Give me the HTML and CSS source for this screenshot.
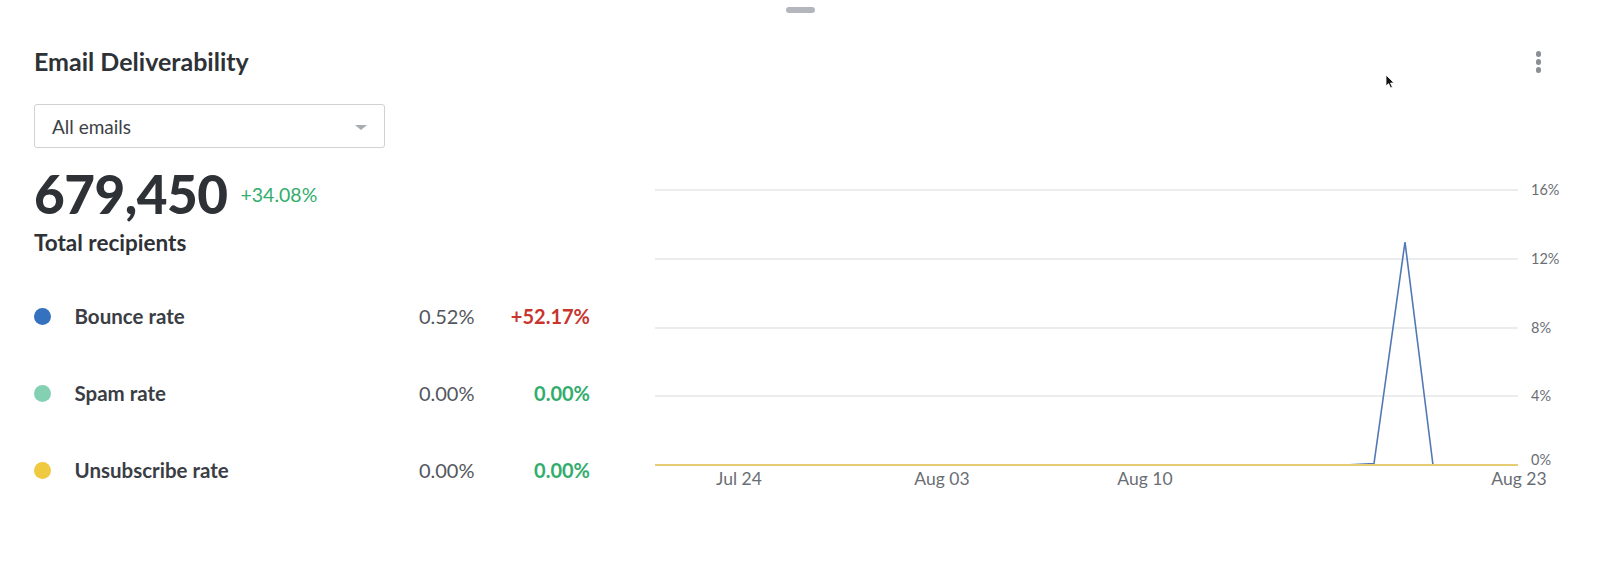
FILE: index.html
```html
<!DOCTYPE html>
<html>
<head>
<meta charset="utf-8">
<link rel="stylesheet" href="styles.css">
</head>
<body>
<div class="page">
  <div class="handle"></div>
  <div class="card">
    <div class="header">
      <h1 class="title">Email Deliverability</h1>
      <button class="kebab" aria-label="More">
        <span></span><span></span><span></span>
      </button>
    </div>
    <div class="main">
      <div class="left">
        <div class="select">
          <span>All emails</span>
          <span class="caret"></span>
        </div>
        <div class="total">
          <span class="big">679,450</span>
          <span class="delta green">+34.08%</span>
        </div>
        <div class="total-label">Total recipients</div>
        <div class="rows">
          <div class="row">
            <span class="dot blue"></span>
            <span class="label">Bounce rate</span>
            <span class="value">0.52%</span>
            <span class="change red">+52.17%</span>
          </div>
          <div class="row">
            <span class="dot teal"></span>
            <span class="label">Spam rate</span>
            <span class="value">0.00%</span>
            <span class="change green">0.00%</span>
          </div>
          <div class="row">
            <span class="dot yellow"></span>
            <span class="label">Unsubscribe rate</span>
            <span class="value">0.00%</span>
            <span class="change green">0.00%</span>
          </div>
        </div>
      </div>
      <svg class="chart" width="930" height="400" viewBox="0 0 930 400">
        <g class="grid">
          <line x1="15" y1="86" x2="878" y2="86"/>
          <line x1="15" y1="155" x2="878" y2="155"/>
          <line x1="15" y1="224" x2="878" y2="224"/>
          <line x1="15" y1="292" x2="878" y2="292"/>
        </g>
        <g class="ylabels">
          <text x="891" y="91">16%</text>
          <text x="891" y="160">12%</text>
          <text x="891" y="229">8%</text>
          <text x="891" y="297">4%</text>
          <text x="891" y="361">0%</text>
        </g>
        <polyline class="line-blue" points="15,361 705,361 734,359.5 765,138 793,361 878,361"/>
        <line class="line-yellow" x1="15" y1="361" x2="878" y2="361"/>
        <g class="xlabels">
          <text x="99" y="381">Jul 24</text>
          <text x="302" y="381">Aug 03</text>
          <text x="505" y="381">Aug 10</text>
          <text x="879" y="381">Aug 23</text>
        </g>
      </svg>
    </div>
  </div>
  <svg class="cursor" width="12" height="16" viewBox="0 0 12 16">
    <path d="M1 1 L1 12 L3.6 9.6 L5.6 14 L7.4 13.2 L5.5 9 L9 9 Z" fill="#111" stroke="#fff" stroke-width="0.8"/>
  </svg>
</div>
</body>
</html>
```

FILE: styles.css
```css
* { box-sizing: border-box; }
html, body {
  margin: 0;
  padding: 0;
  background: #ffffff;
}
body {
  font-family: Lato, "Open Sans", "Liberation Sans", sans-serif;
  color: #2e3237;
  width: 1600px;
  height: 569px;
  overflow: hidden;
}
.page {
  position: relative;
  height: 569px;
}
.handle {
  width: 29px;
  height: 6px;
  border-radius: 3px;
  background: #b3b6bc;
  margin: 7px auto 0;
}
.card {
  padding: 0 59px 0 34px;
}
.header {
  display: flex;
  justify-content: space-between;
  align-items: flex-start;
  margin-top: 33px;
  height: 30px;
}
.title {
  margin: 0;
  font-size: 25px;
  font-weight: 700;
  color: #2e3237;
  line-height: 30px;
}
.kebab {
  border: 0;
  background: none;
  padding: 0;
  display: flex;
  flex-direction: column;
  gap: 2.5px;
  margin-top: 5px;
}
.kebab span {
  width: 5.5px;
  height: 5.5px;
  border-radius: 50%;
  background: #8b8f95;
  display: block;
}
.main {
  display: flex;
  align-items: flex-start;
  margin-top: 28px;
}
.left {
  width: 556px;
  flex: none;
}
.chart {
  flex: none;
  margin-left: 50px;
  display: block;
}
.select {
  width: 351px;
  height: 44px;
  border: 1px solid #cfd1d4;
  border-radius: 3px;
  display: flex;
  align-items: center;
  justify-content: space-between;
  padding: 0 17px 0 17px;
  font-size: 19px;
  color: #3d4147;
}
.caret {
  width: 0;
  height: 0;
  border-left: 6px solid transparent;
  border-right: 6px solid transparent;
  border-top: 5px solid #a8abb0;
  margin-top: 2px;
}
.total {
  display: flex;
  align-items: baseline;
  margin-top: 18px;
  height: 56px;
}
.big {
  font-size: 53px;
  font-weight: 900;
  letter-spacing: -0.5px;
  line-height: 56px;
  color: #2e3237;
}
.delta {
  font-size: 19.5px;
  margin-left: 13px;
  position: relative;
  top: -12px;
}
.green { color: #32ad6c; }
.red { color: #c6362f; }
.total-label {
  font-size: 22.5px;
  font-weight: 700;
  margin-top: 7px;
  color: #2e3237;
  line-height: 28px;
}
.rows {
  margin-top: 47px;
  display: flex;
  flex-direction: column;
  gap: 53px;
}
.row {
  display: flex;
  align-items: center;
  height: 24px;
  font-size: 20px;
}
.dot {
  width: 17px;
  height: 17px;
  border-radius: 50%;
  flex: none;
}
.dot.blue { background: #3471be; }
.dot.teal { background: #84d0b2; }
.dot.yellow { background: #efc940; }
.label {
  margin-left: 23.5px;
  flex: 1;
  font-size: 20.5px;
  font-weight: 700;
  color: #3a3e44;
}
.value {
  width: 100px;
  text-align: right;
  color: #53575d;
}
.change {
  width: 115.5px;
  text-align: right;
  font-weight: 700;
}
.grid line {
  stroke: #d7d9dc;
  stroke-width: 1.2;
}
.ylabels text {
  font-family: Lato, "Open Sans", "Liberation Sans", sans-serif;
  font-size: 14.5px;
  fill: #6a6e74;
}
.xlabels text {
  font-family: Lato, "Open Sans", "Liberation Sans", sans-serif;
  font-size: 17.5px;
  fill: #6a6e74;
  text-anchor: middle;
}
.line-blue {
  fill: none;
  stroke: #5079b6;
  stroke-width: 1.6;
  stroke-linejoin: miter;
}
.line-yellow {
  stroke: #e6cd74;
  stroke-width: 2;
}
.cursor {
  position: absolute;
  left: 1385px;
  top: 67px;
}
```
